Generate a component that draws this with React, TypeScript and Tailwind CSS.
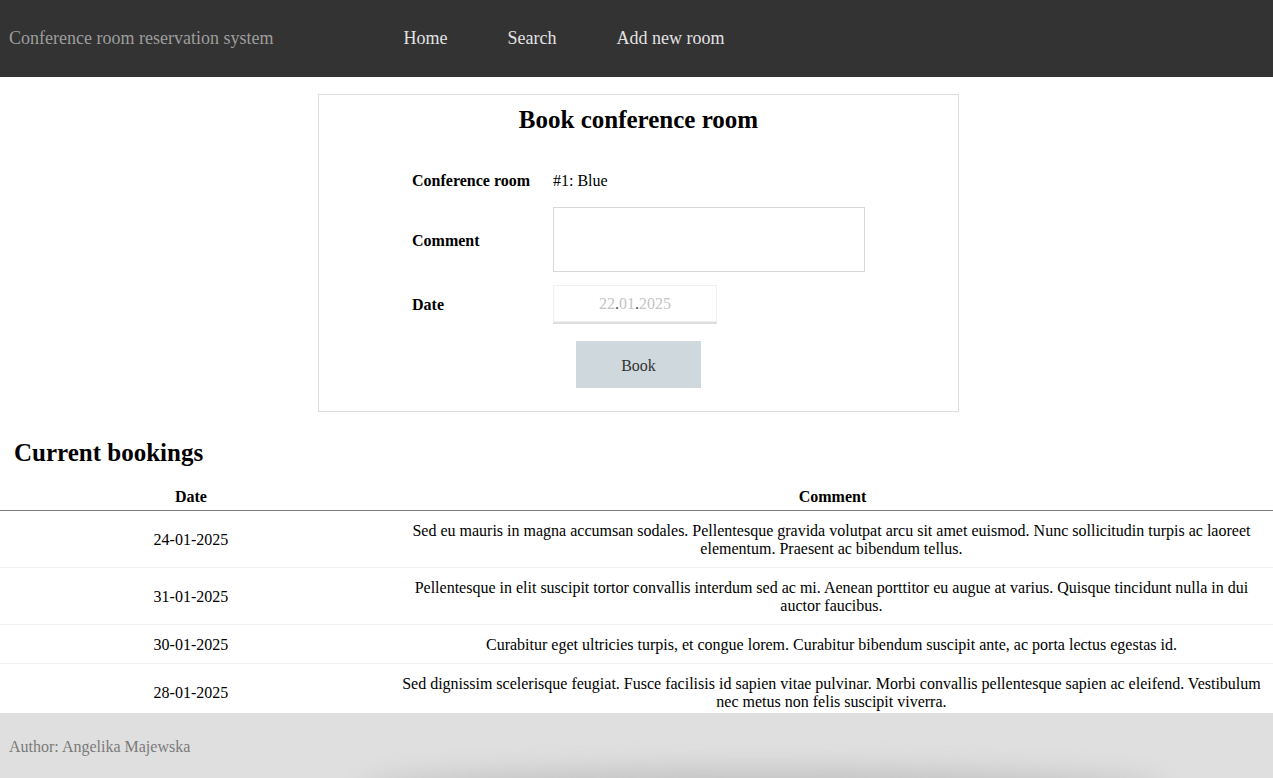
import React from "react";

const bookings = [
  {
    date: "24-01-2025",
    comment:
      "Sed eu mauris in magna accumsan sodales. Pellentesque gravida volutpat arcu sit amet euismod. Nunc sollicitudin turpis ac laoreet elementum. Praesent ac bibendum tellus.",
  },
  {
    date: "31-01-2025",
    comment:
      "Pellentesque in elit suscipit tortor convallis interdum sed ac mi. Aenean porttitor eu augue at varius. Quisque tincidunt nulla in dui auctor faucibus.",
  },
  {
    date: "30-01-2025",
    comment:
      "Curabitur eget ultricies turpis, et congue lorem. Curabitur bibendum suscipit ante, ac porta lectus egestas id.",
  },
  {
    date: "28-01-2025",
    comment:
      "Sed dignissim scelerisque feugiat. Fusce facilisis id sapien vitae pulvinar. Morbi convallis pellentesque sapien ac eleifend. Vestibulum nec metus non felis suscipit viverra.",
  },
];

function NavBar() {
  return (
    <nav className="flex items-center h-[77px] bg-[#333333] text-[18px]">
      <span className="pl-[9px] text-[#9d9d9d]">Conference room reservation system</span>
      <div className="flex items-center gap-[60px] ml-[130px] text-[#e2e2e2]">
        <a href="#">Home</a>
        <a href="#">Search</a>
        <a href="#">Add new room</a>
      </div>
    </nav>
  );
}

function BookingForm() {
  return (
    <div className="w-[641px] ml-[318px] mt-[17px] border border-[#dcdcdc] pt-[10px] pb-[23px]">
      <h2 className="text-center text-[25px] font-bold leading-[30px]">Book conference room</h2>
      <div className="w-[453px] mx-auto mt-[31px] text-[16px]">
        <div className="flex items-center h-[28px] pt-[2px]">
          <span className="w-[141px] font-bold">Conference room</span>
          <span>#1: Blue</span>
        </div>
        <div className="flex items-center mt-[13px]">
          <span className="w-[141px] font-bold pt-[3px]">Comment</span>
          <textarea className="w-[312px] h-[65px] border border-[#d8d8d8] resize-none outline-none" />
        </div>
        <div className="flex items-center mt-[13px]">
          <span className="w-[141px] font-bold pt-[2px]">Date</span>
          <div className="w-[164px] h-[37px] flex items-center justify-center border border-[#f0f0f0] shadow-[0_2px_0_#dedede] text-[#c4c4c4]">
            22<span className="text-[#444]">.</span>01<span className="text-[#444]">.</span>2025
          </div>
        </div>
        <div className="flex justify-center mt-[19px]">
          <button className="w-[125px] h-[47px] bg-[#cfd8dc] text-[#333] text-[16px] pt-[2px]">Book</button>
        </div>
      </div>
    </div>
  );
}

function BookingsTable() {
  return (
    <section className="mt-[26px] pb-[8px]">
      <h2 className="pl-[14px] text-[25px] font-bold leading-[30px]">Current bookings</h2>
      <table className="w-full mt-[14px] border-collapse text-[16px] leading-[18px]">
        <thead>
          <tr className="border-b border-[#7a7a7a]">
            <th className="w-[30%] pt-[6px] pb-[4px] font-bold">Date</th>
            <th className="pt-[6px] pb-[4px] pl-[15px] pr-[5px] font-bold">Comment</th>
          </tr>
        </thead>
        <tbody>
          {bookings.map((b) => (
            <tr key={b.date} className="border-b border-[#efefef]">
              <td className="pt-[11px] pb-[9px] px-[10px] text-center">{b.date}</td>
              <td className="pt-[11px] pb-[9px] pl-[14px] pr-[6px] text-center">{b.comment}</td>
            </tr>
          ))}
        </tbody>
      </table>
    </section>
  );
}

function Footer() {
  return (
    <footer className="fixed bottom-0 left-0 right-0 h-[65px] bg-[#dfdfdf] flex items-center overflow-hidden">
      <span className="pl-[9px] pt-[3px] text-[16px] text-[#7a7a7a]">Author: Angelika Majewska</span>
      <div className="absolute left-[360px] right-[110px] bottom-[-28px] h-[38px] rounded-[50%] bg-[#c4c4c4] blur-[12px]" />
    </footer>
  );
}

export default function App() {
  return (
    <div className="min-h-screen bg-white text-black font-['Liberation_Serif','Times_New_Roman',serif]">
      <NavBar />
      <BookingForm />
      <BookingsTable />
      <Footer />
    </div>
  );
}
